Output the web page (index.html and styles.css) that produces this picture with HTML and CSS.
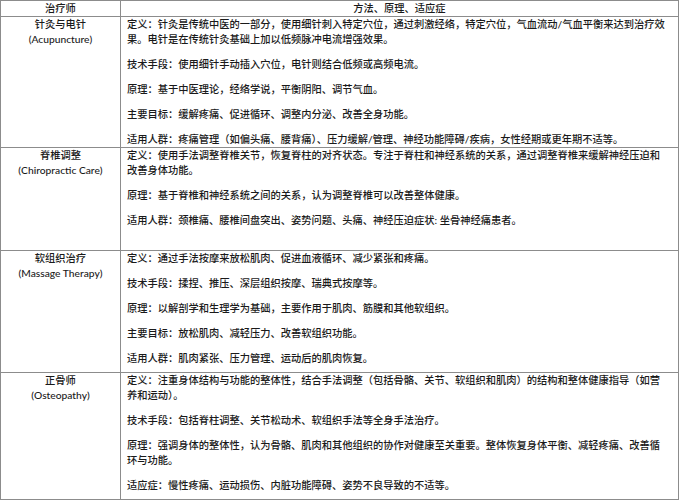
FILE: index.html
```html
<!DOCTYPE html>
<html lang="zh-CN">
<head>
<meta charset="utf-8">
<title>治疗方法对比</title>
<link rel="stylesheet" href="styles.css">
</head>
<body>
<table class="therapy">
  <colgroup>
    <col class="col-name">
    <col class="col-desc">
  </colgroup>
  <tr class="row-head">
    <th>治疗师</th>
    <th>方法、原理、适应症</th>
  </tr>
  <tr class="row-1">
    <td class="name">针灸与电针<br>(Acupuncture)</td>
    <td class="desc">
      <p>定义：针灸是传统中医的一部分，使用细针刺入特定穴位，通过刺激经络，特定穴位，气血流动/气血平衡来达到治疗效<br>果。电针是在传统针灸基础上加以低频脉冲电流增强效果。</p>
      <p>技术手段：使用细针手动插入穴位，电针则结合低频或高频电流。</p>
      <p>原理：基于中医理论，经络学说，平衡阴阳、调节气血。</p>
      <p>主要目标：缓解疼痛、促进循环、调整内分泌、改善全身功能。</p>
      <p>适用人群：疼痛管理（如偏头痛、腰背痛）、压力缓解/管理、神经功能障碍/疾病，女性经期或更年期不适等。</p>
    </td>
  </tr>
  <tr class="row-2">
    <td class="name">脊椎调整<br>(Chiropractic Care)</td>
    <td class="desc">
      <p>定义：使用手法调整脊椎关节，恢复脊柱的对齐状态。专注于脊柱和神经系统的关系，通过调整脊椎来缓解神经压迫和<br>改善身体功能。</p>
      <p>原理：基于脊椎和神经系统之间的关系，认为调整脊椎可以改善整体健康。</p>
      <p>适用人群：颈椎痛、腰椎间盘突出、姿势问题、头痛、神经压迫症状: 坐骨神经痛患者。</p>
    </td>
  </tr>
  <tr class="row-3">
    <td class="name">软组织治疗<br>(Massage Therapy)</td>
    <td class="desc">
      <p>定义：通过手法按摩来放松肌肉、促进血液循环、减少紧张和疼痛。</p>
      <p>技术手段：揉捏、推压、深层组织按摩、瑞典式按摩等。</p>
      <p>原理：以解剖学和生理学为基础，主要作用于肌肉、筋膜和其他软组织。</p>
      <p>主要目标：放松肌肉、减轻压力、改善软组织功能。</p>
      <p>适用人群：肌肉紧张、压力管理、运动后的肌肉恢复。</p>
    </td>
  </tr>
  <tr class="row-4">
    <td class="name">正骨师<br>(Osteopathy)</td>
    <td class="desc">
      <p>定义：注重身体结构与功能的整体性，结合手法调整（包括骨骼、关节、软组织和肌肉）的结构和整体健康指导（如营<br>养和运动）。</p>
      <p>技术手段：包括脊柱调整、关节松动术、软组织手法等全身手法治疗。</p>
      <p>原理：强调身体的整体性，认为骨骼、肌肉和其他组织的协作对健康至关重要。整体恢复身体平衡、减轻疼痛、改善循<br>环与功能。</p>
      <p>适应症：慢性疼痛、运动损伤、内脏功能障碍、姿势不良导致的不适等。</p>
    </td>
  </tr>
</table>
</body>
</html>
```
FILE: styles.css
```css
html, body {
  margin: 0;
  padding: 0;
  background: #ffffff;
}

body {
  font-family: "Lato", "Noto Sans CJK SC", sans-serif;
  font-size: 10.25px;
  font-weight: 500;
  line-height: 15px;
  color: #1a1a1a;
}

.therapy {
  border-collapse: collapse;
  table-layout: fixed;
  width: 679px;
}

.col-name {
  width: 120px;
}

.therapy th,
.therapy td {
  border: 1px solid #8c8c8c;
  vertical-align: top;
  padding: 0 6px;
}

.therapy th {
  font-weight: 500;
  text-align: center;
  height: 15px;
  line-height: 15px;
}

.name {
  text-align: center;
  padding-top: 1px;
}

.desc {
  padding-right: 2px;
}

.desc p {
  margin: 0 0 10px 0;
}

.desc p:last-child {
  margin-bottom: 0;
}

.row-1 td { height: 129px; }
.row-2 td { height: 102px; }
.row-3 td { height: 121px; }
.row-4 td { height: 126px; }
```
